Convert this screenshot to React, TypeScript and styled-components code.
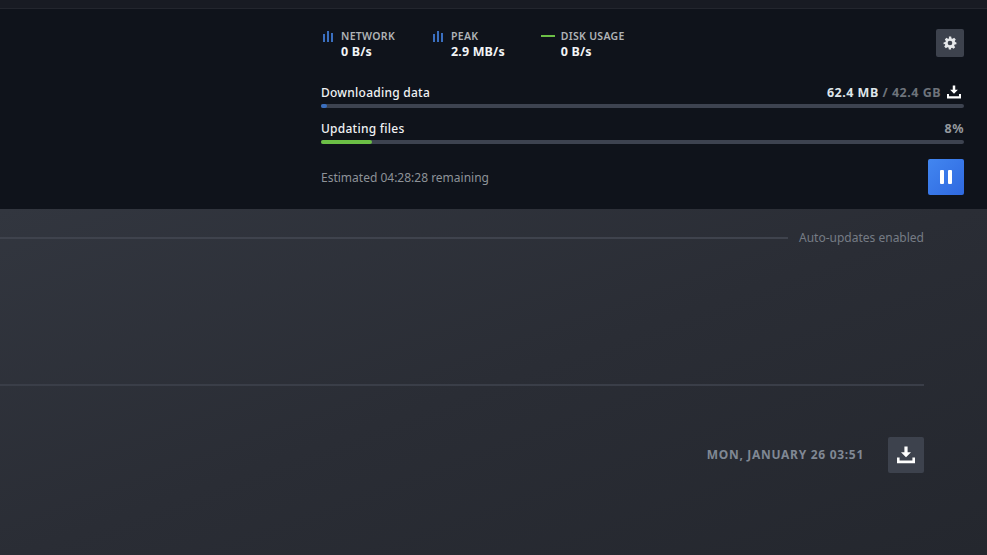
import styled, { createGlobalStyle } from 'styled-components';

const GlobalStyle = createGlobalStyle`
  html, body {
    margin: 0;
    height: 100%;
    overflow: hidden;
    background: #24272e;
  }
  #root {
    height: 100%;
  }
  * {
    box-sizing: border-box;
  }
`;

const Page = styled.div`
  width: 987px;
  height: 555px;
  display: flex;
  flex-direction: column;
  font-family: 'Noto Sans', 'Open Sans', sans-serif;
`;

const TopStrip = styled.div`
  height: 9px;
  background: #181b23;
  border-bottom: 1px solid #23262e;
`;

const DownloadPanel = styled.section`
  height: 200px;
  padding: 19px 23px 14px 321px;
  background: #0f131b;
  display: flex;
  flex-direction: column;
`;

const StatsRow = styled.div`
  display: flex;
  align-items: flex-start;
  justify-content: space-between;
  height: 43px;
`;

const Stats = styled.div`
  display: flex;
  gap: 36px;
  padding-top: 1px;
`;

const Stat = styled.div`
  display: flex;
  gap: 8px;
`;

const StatIcon = styled.div`
  width: 12px;
  height: 14px;
  margin-top: 1px;
  display: flex;
  align-items: center;
`;

const StatText = styled.div`
  display: flex;
  flex-direction: column;
`;

const StatLabel = styled.span`
  font-size: 10.5px;
  line-height: 14px;
  font-weight: 600;
  letter-spacing: 0.3px;
  color: #b0b3b7;
`;

const StatValue = styled.span`
  font-size: 12.5px;
  line-height: 17px;
  font-weight: 700;
  letter-spacing: 0.15px;
  color: #f2f4f6;
`;

const SettingsButton = styled.button`
  width: 28px;
  height: 28px;
  margin-top: 1px;
  padding: 0;
  border: 0;
  border-radius: 2px;
  background: #3d424d;
  display: flex;
  align-items: center;
  justify-content: center;
`;

const ProgressBlock = styled.div<{ $gap: number }>`
  margin-top: ${(p) => p.$gap}px;
`;

const ProgressHead = styled.div`
  display: flex;
  align-items: center;
  justify-content: space-between;
  height: 18px;
`;

const ProgressTitle = styled.span`
  font-size: 12px;
  font-weight: 500;
  letter-spacing: 0.25px;
  color: #f0f2f4;
`;

const ProgressMeta = styled.span<{ $color: string }>`
  display: flex;
  align-items: center;
  gap: 6px;
  font-size: 12.5px;
  font-weight: 700;
  letter-spacing: 0.5px;
  color: ${(p) => p.$color};
`;

const MetaIcon = styled.span`
  display: flex;
  margin-right: 3px;
`;

const Done = styled.b`
  color: #dfe5ea;
  font-weight: 700;
`;

const Track = styled.div`
  height: 4px;
  margin-top: 3px;
  border-radius: 2px;
  background: #3d4350;
`;

const Fill = styled.div<{ $color: string }>`
  height: 100%;
  border-radius: 2px;
  background: ${(p) => p.$color};
`;

const PanelFoot = styled.div`
  display: flex;
  align-items: center;
  justify-content: space-between;
  margin-top: 15px;
`;

const Estimate = styled.span`
  font-size: 12px;
  color: #8d9298;
`;

const PauseButton = styled.button`
  width: 36px;
  height: 36px;
  padding: 0;
  border: 0;
  border-radius: 2px;
  background: linear-gradient(135deg, #4286f0, #2f69e0);
  display: flex;
  align-items: center;
  justify-content: center;
  gap: 4px;
`;

const PauseBar = styled.span`
  width: 4px;
  height: 14px;
  background: #ffffff;
  border-radius: 1px;
`;

const Queue = styled.main`
  flex: 1;
  padding: 0 63px 0 0;
  background: linear-gradient(160deg, #32363f 0%, #2a2d35 50%, #24272e 100%);
`;

const QueueHead = styled.div`
  height: 177px;
  padding-top: 20px;
  border-bottom: 2px solid #3a3e48;
  display: flex;
  align-items: flex-start;
  gap: 11px;
`;

const HeadRule = styled.div`
  flex: 1;
  height: 2px;
  margin-top: 8px;
  background: #3f434d;
`;

const AutoUpdates = styled.span`
  font-size: 12px;
  line-height: 17px;
  color: #767c85;
`;

const QueueRow = styled.div`
  display: flex;
  align-items: center;
  justify-content: flex-end;
  gap: 24px;
  margin-top: 51px;
`;

const DateLabel = styled.span`
  padding-bottom: 2px;
  font-size: 12px;
  font-weight: 700;
  letter-spacing: 0.7px;
  color: #808894;
`;

const RowDownload = styled.button`
  width: 36px;
  height: 36px;
  padding: 0;
  border: 0;
  border-radius: 2px;
  background: #3d424d;
  display: flex;
  align-items: center;
  justify-content: center;
`;

const BarsIcon = () => (
  <svg width="12" height="14" viewBox="0 0 12 14" fill="#3a6fc0">
    <rect x="2" y="4" width="2" height="8" />
    <rect x="6" y="1" width="2" height="11" />
    <rect x="10" y="3" width="2" height="9" />
  </svg>
);

const GreenDash = styled.span`
  flex: none;
  width: 14px;
  height: 2px;
  margin-bottom: 2px;
  background: #6cbf46;
`;

const DownloadIcon = ({ size }: { size: number }) => (
  <svg width={size} height={size} viewBox="0 0 18 18" fill="#ffffff">
    <path d="M7.4 0.5h3.2v5.7h3.4L9 11.2 4 6.2h3.4z" />
    <path d="M0 11.5h2.6v3h12.8v-3H18v5.7H0z" />
  </svg>
);

const GearIcon = () => (
  <svg width="14" height="14" viewBox="0 0 24 24" fill="#e6e8ea">
    <path
      fillRule="evenodd"
      d="M10 1h4l.6 3.1 1.9.8 2.6-1.8 2.8 2.8-1.8 2.6.8 1.9L23 11v3l-3.1.6-.8 1.9 1.8 2.6-2.8 2.8-2.6-1.8-1.9.8L14 23h-4l-.6-3.1-1.9-.8-2.6 1.8-2.8-2.8 1.8-2.6-.8-1.9L1 14v-3l3.1-.6.8-1.9-1.8-2.6 2.8-2.8 2.6 1.8 1.9-.8zM12 8a4 4 0 1 0 0 8 4 4 0 0 0 0-8z"
    />
  </svg>
);

const stats = [
  { label: 'NETWORK', value: '0 B/s', icon: <BarsIcon /> },
  { label: 'PEAK', value: '2.9 MB/s', icon: <BarsIcon /> },
  { label: 'DISK USAGE', value: '0 B/s', icon: <GreenDash /> },
];

const App = () => {
  return (
    <Page>
      <GlobalStyle />
      <TopStrip />
      <DownloadPanel>
        <StatsRow>
          <Stats>
            {stats.map((s) => (
              <Stat key={s.label}>
                <StatIcon>{s.icon}</StatIcon>
                <StatText>
                  <StatLabel>{s.label}</StatLabel>
                  <StatValue>{s.value}</StatValue>
                </StatText>
              </Stat>
            ))}
          </Stats>
          <SettingsButton aria-label="settings">
            <GearIcon />
          </SettingsButton>
        </StatsRow>

        <ProgressBlock $gap={12}>
          <ProgressHead>
            <ProgressTitle>Downloading data</ProgressTitle>
            <ProgressMeta $color="#6e737b">
              <span>
                <Done>62.4 MB</Done> / 42.4 GB
              </span>
              <MetaIcon>
                <DownloadIcon size={14} />
              </MetaIcon>
            </ProgressMeta>
          </ProgressHead>
          <Track>
            <Fill $color="#3a6fc0" style={{ width: '1%' }} />
          </Track>
        </ProgressBlock>

        <ProgressBlock $gap={11}>
          <ProgressHead>
            <ProgressTitle>Updating files</ProgressTitle>
            <ProgressMeta $color="#969a9f">8%</ProgressMeta>
          </ProgressHead>
          <Track>
            <Fill $color="#6cbf46" style={{ width: '8%' }} />
          </Track>
        </ProgressBlock>

        <PanelFoot>
          <Estimate>Estimated 04:28:28 remaining</Estimate>
          <PauseButton aria-label="pause">
            <PauseBar />
            <PauseBar />
          </PauseButton>
        </PanelFoot>
      </DownloadPanel>

      <Queue>
        <QueueHead>
          <HeadRule />
          <AutoUpdates>Auto-updates enabled</AutoUpdates>
        </QueueHead>
        <QueueRow>
          <DateLabel>MON, JANUARY 26 03:51</DateLabel>
          <RowDownload aria-label="download">
            <DownloadIcon size={18} />
          </RowDownload>
        </QueueRow>
      </Queue>
    </Page>
  );
};

export default App;
